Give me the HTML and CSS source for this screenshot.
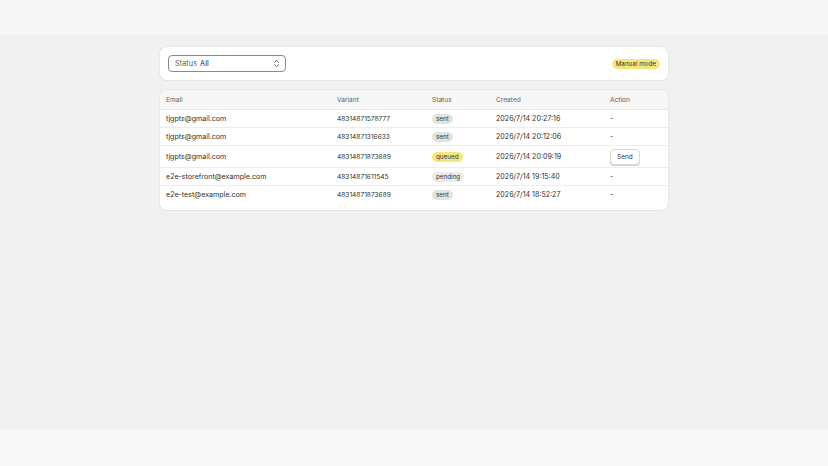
FILE: index.html
```html
<!DOCTYPE html>
<html lang="en">
<head>
  <meta charset="UTF-8" />
  <title>Notifications</title>
  <link rel="stylesheet" href="styles.css">
</head>
<body>

  <header class="topbar"></header>

  <main class="page">
    <div class="wrap">

      <!-- Filter bar -->
      <section class="card filters">
        <label class="select">
          <span class="select-label">Status</span>
          <span class="select-value">All</span>
          <svg class="chev" width="7" height="9" viewBox="0 0 7 9">
            <path d="M1.5 3.2 L3.5 1.3 L5.5 3.2 M1.5 5.8 L3.5 7.7 L5.5 5.8" fill="none" stroke="#4a4a4a" stroke-width="0.9" stroke-linecap="round" stroke-linejoin="round"/>
          </svg>
        </label>
        <span class="badge yellow">Manual mode</span>
      </section>

      <!-- Requests table -->
      <section class="card list">
        <table>
          <thead>
            <tr><th class="c-email">Email</th><th class="c-variant">Variant</th><th class="c-status">Status</th><th class="c-created">Created</th><th>Action</th></tr>
          </thead>
          <tbody>
            <tr><td>tjgpts@gmail.com</td><td class="num">48314871578777</td><td><span class="badge sent">sent</span></td><td>2026/7/14 20:27:16</td><td>-</td></tr>
            <tr><td>tjgpts@gmail.com</td><td class="num">48314871316633</td><td><span class="badge sent">sent</span></td><td>2026/7/14 20:12:06</td><td>-</td></tr>
            <tr class="tall"><td>tjgpts@gmail.com</td><td class="num">48314871873689</td><td><span class="badge yellow">queued</span></td><td>2026/7/14 20:09:19</td><td><button class="btn">Send</button></td></tr>
            <tr><td>e2e-storefront@example.com</td><td class="num">48314871611545</td><td><span class="badge pending">pending</span></td><td>2026/7/14 19:15:40</td><td>-</td></tr>
            <tr><td>e2e-test@example.com</td><td class="num">48314871873689</td><td><span class="badge sent">sent</span></td><td>2026/7/14 18:52:27</td><td>-</td></tr>
          </tbody>
        </table>
      </section>

    </div>
  </main>

  <footer class="bottombar"></footer>

</body>
</html>
```

FILE: styles.css
```css
body {
  margin: 0;
  font-family: Inter, "Noto Sans", sans-serif;
  color: #303030;
  background: #f7f7f7;
}
.topbar {
  height: 35px;
  background: #f7f7f7;
}
.bottombar {
  height: 36px;
  background: #f8f8f8;
}
.page {
  height: 395px;
  background: #f1f1f1;
  box-sizing: border-box;
  padding-top: 12px;
}
.wrap {
  width: 508px;
  margin: 0 auto;
}
.card {
  background: #fff;
  border-radius: 7px;
  box-shadow: 0 0 0 1px #e6e6e6, 0 1px 0 #dedede;
}
.filters {
  display: flex;
  align-items: center;
  justify-content: space-between;
  height: 33px;
  padding: 0 8px;
  box-sizing: border-box;
}
.select {
  display: flex;
  align-items: center;
  width: 118px;
  height: 17px;
  box-sizing: border-box;
  padding: 0 5px 0 6px;
  border: 1px solid #8a8a8a;
  border-radius: 4px;
  font-size: 7.4px;
}
.select-label {
  color: #616161;
  margin-right: 3px;
}
.select-value {
  flex: 1;
  color: #303030;
}
.badge {
  display: inline-block;
  font-size: 6.3px;
  line-height: 10px;
  padding: 0 4px;
  border-radius: 6px;
  color: #333;
}
.badge.yellow {
  background: #f5e77e;
}
.badge.sent {
  background: #e1e4e0;
}
.badge.pending {
  background: #ebebeb;
}
.list {
  margin-top: 10px;
  overflow: hidden;
  padding-bottom: 7px;
}
table {
  width: 100%;
  border-collapse: collapse;
}
th {
  background: #f7f7f7;
  height: 19px;
  font-size: 6.6px;
  font-weight: 400;
  color: #616161;
  text-align: left;
  padding: 0 6px;
  border-bottom: 1px solid #e8e8e8;
}
td {
  height: 17px;
  font-size: 7.1px;
  padding: 0 6px;
  border-bottom: 1px solid #ededed;
  white-space: nowrap;
}
tbody tr:last-child td {
  border-bottom: none;
}
tr.tall td {
  height: 21px;
}
td.num {
  font-size: 6.6px;
}
.c-email { width: 159px; }
.c-variant { width: 83px; }
.c-status { width: 52px; }
.c-created { width: 102px; }
.btn {
  font-family: inherit;
  font-size: 6.5px;
  color: #303030;
  background: #fff;
  border: 1px solid #d9d9d9;
  border-radius: 4px;
  box-shadow: 0 1px 0 #d0d0d0;
  padding: 3px 6px;
}
```
